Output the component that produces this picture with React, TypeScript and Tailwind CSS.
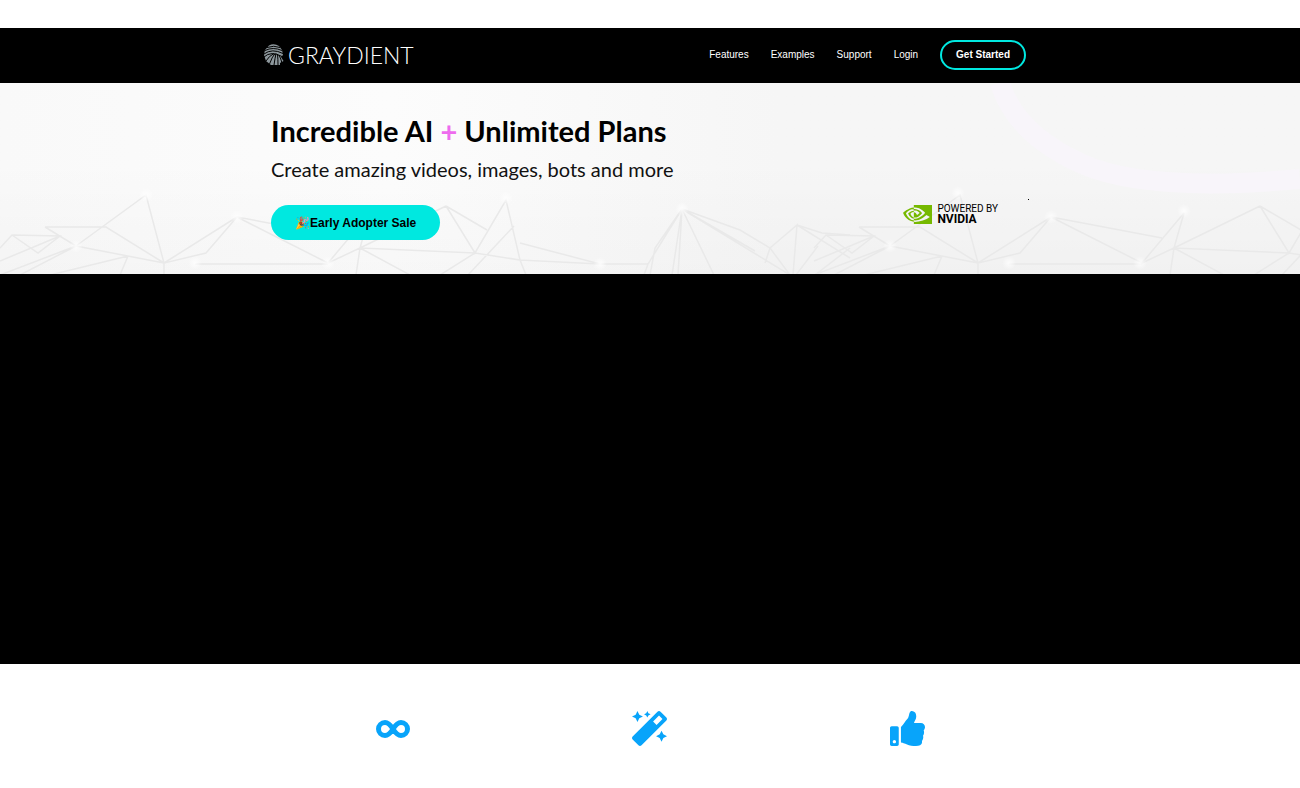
import { FaMagic, FaThumbsUp } from 'react-icons/fa'
import { SiNvidia } from 'react-icons/si'

const navLinks = ['Features', 'Examples', 'Support', 'Login']

const meshLines =
  'M76 163L146 112L164 180M45 144H106L164 180L76 163L45 144M164 180L237 134L206 170L164 180V192' +
  'M237 134L328 180L370 130L360 165L328 180M237 134L348 155M195 181H328M0 165L12 152L60 153L38 170L12 152' +
  'M0 192L76 163L20 192M0 178L60 153M128 173L120 192M128 173L50 192M360 165L475 170M360 165L446 123' +
  'M360 165L356 192M360 165L410 192M446 123L487 147M446 123L475 170L506 117L520 177L475 170L440 192' +
  'M514 143L468 192M520 160L600 181L520 177L526 192M600 181H648'

const peakLines =
  'M682 126L648 181L644 192M682 126L655 165L650 192M682 126L672 192M682 126L678 192M682 126L714 192' +
  'M682 126L740 147L770 165L790 192L682 126L755 168M770 165L797 142L793 192M797 142L850 175M770 165L765 180' +
  'M797 142L822 150L850 152M818 163L796 192M850 165L815 192'

const glows = [
  [76, 163], [146, 112], [195, 180], [237, 134], [328, 180], [506, 115], [600, 181],
  [682, 126], [890, 163], [958, 110], [1009, 180], [1051, 134], [1140, 180], [1184, 128],
]

function Mark() {
  return (
    <svg viewBox="0 0 20 21" className="h-[21px] w-5" aria-hidden="true">
      <path d="M5 1.5Q10-1 15 2L18 6L19 11L17 13L19.500 17L16 19V21H7L2 17L0 11L1 6Z" fill="#8d979c" />
      <g fill="none" stroke="#000" strokeWidth="1">
        <path d="M3 3.500Q10 1 16 3.500M1 6.500Q9 2.500 18 6.500M0 10Q8 4 19 9.500M0 13Q7 6.500 18 12.500" />
        <path d="M10 9.500Q5 12 2 17M11 9.500Q8 13 5.500 20M12 9.500Q11 14 10 21M13.500 10Q14 15 14 21M15 11Q17 15 18 19" />
      </g>
    </svg>
  )
}

function Infinity() {
  return (
    <svg viewBox="0 0 34 18" className="h-[18px] w-[34px]" fill="none" stroke="currentColor" strokeWidth="5" aria-hidden="true">
      <path d="M17 9C14.500 5 12 2.500 9 2.500A6.500 6.500 0 0 0 9 15.500C12 15.500 14.500 13 17 9C19.500 5 22 2.500 25 2.500A6.500 6.500 0 0 1 25 15.500C22 15.500 19.500 13 17 9Z" />
    </svg>
  )
}

function Mesh() {
  return (
    <svg
      viewBox="0 0 1300 191"
      preserveAspectRatio="xMidYMax slice"
      className="absolute inset-0 h-full w-full"
      fill="none"
      aria-hidden="true"
    >
      <defs>
        <radialGradient id="glow">
          <stop offset="0" stopColor="#fff" stopOpacity="0.8" />
          <stop offset="1" stopColor="#fff" stopOpacity="0" />
        </radialGradient>
        <linearGradient id="shade" x2="0" y2="1">
          <stop offset="0.4" stopColor="#000" stopOpacity="0" />
          <stop offset="1" stopColor="#000" stopOpacity="0.02" />
        </linearGradient>
      </defs>
      <rect width="1300" height="191" fill="url(#shade)" />
      <path d="M1000 0Q1015 50 1080 80T1300 96" stroke="#f8f5fa" strokeWidth="20" />
      <g stroke="#e9e9e9" strokeWidth="1.5">
        <path d={meshLines} />
        <path d={peakLines} />
        <path d={meshLines} transform="translate(814)" />
      </g>
      {glows.map(([x, y]) => (
        <circle key={x} cx={x} cy={y} r="7" fill="url(#glow)" />
      ))}
    </svg>
  )
}

export default function App() {
  return (
    <div className="bg-white pt-7 font-['Liberation_Sans',Arial,sans-serif] text-black">
      <header className="bg-black text-white">
        <div className="mx-auto flex h-[55px] max-w-[772px] items-center justify-between pr-[10px] pb-[2px]">
          <a href="#" className="flex items-center gap-1" aria-label="Graydient">
            <Mark />
            <span className="font-[Lato,sans-serif] text-[23px] leading-8 font-light">GRAYDIENT</span>
          </a>
          <nav className="flex items-center gap-[22px] text-[10px]">
            {navLinks.map(link => (
              <a key={link} href="#">{link}</a>
            ))}
            <a
              href="#"
              className="flex h-[30px] items-center rounded-full border-2 border-[#00e8e0] px-[14px] font-bold"
            >
              Get Started
            </a>
          </nav>
        </div>
      </header>

      <section className="relative bg-linear-to-r from-[#f9f9f9] via-[#fcfcfc] via-30% to-[#f6f6f6] to-60%">
        <Mesh />
        <div className="relative mx-auto flex max-w-[772px] items-end justify-between pt-[31px] pr-[7px] pb-[34px] pl-[7px]">
          <div>
            <h1 className="font-[Lato,sans-serif] text-[29px] leading-[34px] font-bold">
              Incredible AI <span className="text-[#ee6bee]">+</span> Unlimited Plans
            </h1>
            <p className="mt-1 font-[Lato,sans-serif] text-[20px] leading-[34px] text-[#111]">
              Create amazing videos, images, bots and more
            </p>
            <button className="mt-[19px] flex h-[35px] items-center rounded-full bg-[#00e8e0] px-6 text-[12px] font-bold">
              🎉Early Adopter Sale
            </button>
          </div>
          <div className="flex items-start pb-[15px]">
            <div className="flex items-center gap-[5px] pt-1">
              <SiNvidia className="-my-[5px] size-[29px] text-[#76b900]" />
              <p className="font-[Roboto,sans-serif] text-[10px] leading-[11px]">
                POWERED BY
                <strong className="block text-[12px]">NVIDIA</strong>
              </p>
            </div>
            <span className="ml-[30px] size-px bg-black" />
          </div>
        </div>
      </section>

      <section className="h-[390px] bg-black" />

      <section className="mx-auto grid max-w-[772px] grid-cols-3 items-center justify-items-center pt-[47px] pb-[42px] text-[#08a4fa]">
        <Infinity />
        <FaMagic className="size-[35px]" />
        <FaThumbsUp className="size-[35px]" />
      </section>
    </div>
  )
}
